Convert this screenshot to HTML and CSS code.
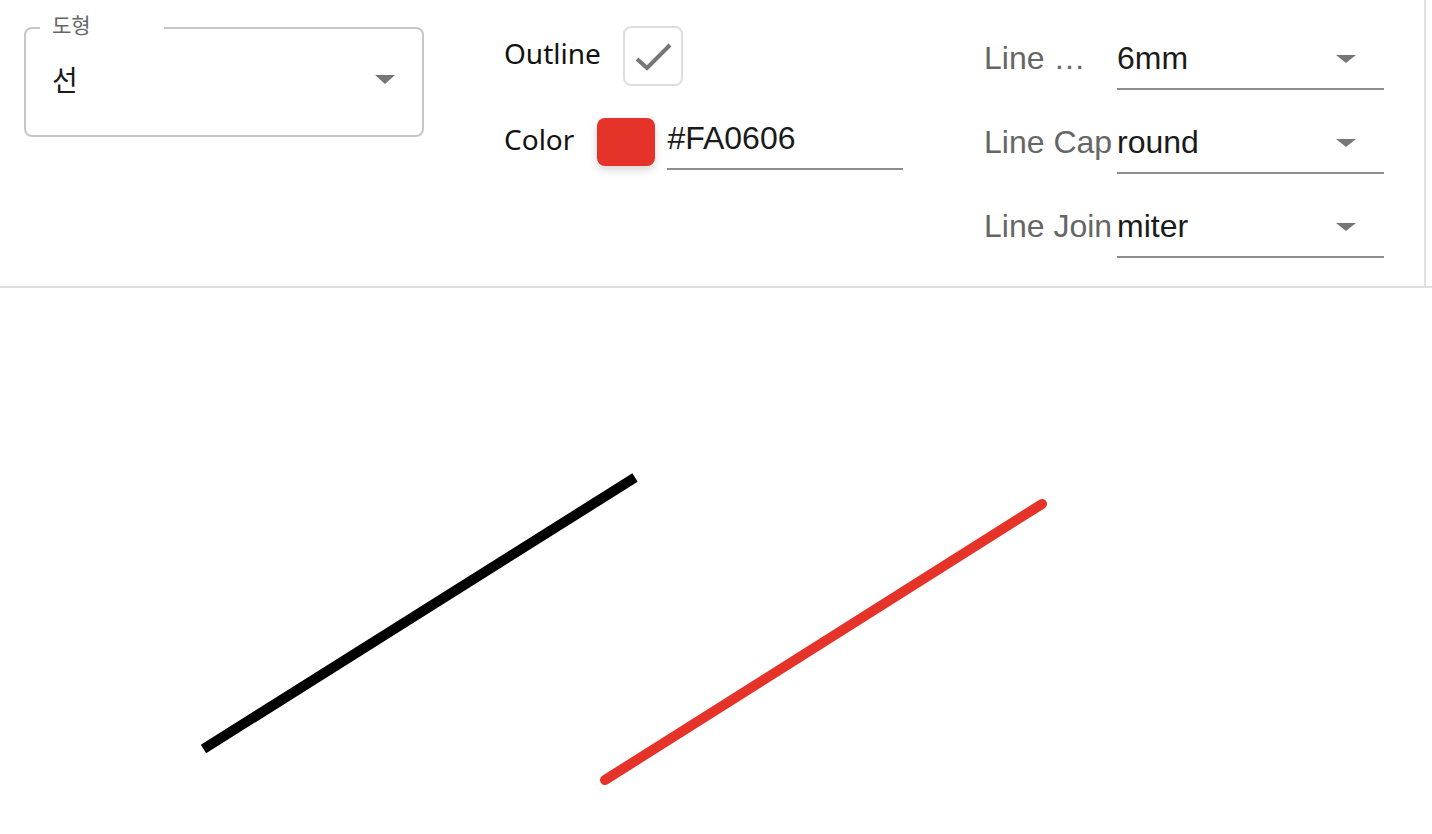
FILE: index.html
```html
<!DOCTYPE html>
<html lang="ko">
<head>
<meta charset="utf-8">
<title>Line style</title>
<link rel="stylesheet" href="styles.css">
</head>
<body>
<div class="panel">
  <div class="toolbar">
    <div class="col col-shape">
      <div class="outlined-select">
        <span class="notch-label">도형</span>
        <div class="select-row">
          <span class="select-value">선</span>
          <span class="caret"></span>
        </div>
      </div>
    </div>
    <div class="col col-style">
      <div class="style-row">
        <span class="style-label outline-label">Outline</span>
        <span class="checkbox">
          <svg width="56" height="56" viewBox="0 0 56 56"><path d="M12 31 L22 40 L45 17" fill="none" stroke="#767676" stroke-width="4"/></svg>
        </span>
      </div>
      <div class="style-row color-row">
        <span class="style-label">Color</span>
        <span class="swatch"></span>
        <span class="hex-input">#FA0606</span>
      </div>
    </div>
    <div class="col col-line">
      <div class="line-row">
        <span class="line-label">Line …</span>
        <div class="underline-select"><span class="u-value">6mm</span><span class="caret small"></span></div>
      </div>
      <div class="line-row">
        <span class="line-label">Line Cap</span>
        <div class="underline-select"><span class="u-value">round</span><span class="caret small"></span></div>
      </div>
      <div class="line-row">
        <span class="line-label">Line Join</span>
        <div class="underline-select"><span class="u-value">miter</span><span class="caret small"></span></div>
      </div>
    </div>
  </div>
</div>
<div class="canvas">
  <svg class="drawing" width="1432" height="546" viewBox="0 0 1432 546">
    <line x1="203.5" y1="461" x2="635" y2="189.5" stroke="#000" stroke-width="10" stroke-linecap="butt"/>
    <line x1="605" y1="492" x2="1042" y2="216" stroke="#e5332a" stroke-width="10" stroke-linecap="round"/>
  </svg>
</div>
</body>
</html>
```

FILE: styles.css
```css
* { box-sizing: border-box; }
html, body { margin: 0; padding: 0; background: #fff; }
body {
  font-family: "Noto Sans", "Noto Sans CJK KR", sans-serif;
  color: #111;
  width: 1432px;
  height: 834px;
  overflow: hidden;
}
.panel {
  border-bottom: 2px solid #dde1dd;
}
.toolbar {
  display: flex;
  width: 1426px;
  height: 286px;
  border-right: 2px solid #e2e2e2;
  padding-left: 24px;
}
.col-shape { width: 481px; padding-top: 27px; }
.col-style { width: 480px; padding-top: 26px; }
.col-line { width: 399px; padding-top: 38px; }

.outlined-select {
  position: relative;
  width: 400px;
  height: 110px;
  border: 2px solid #c6c6c6;
  border-radius: 8px;
  padding: 30px 27px 0 26px;
}
.notch-label {
  position: absolute;
  left: 14px;
  top: -19px;
  padding: 0 73px 0 12px;
  background: #fff;
  font-family: "Noto Sans CJK KR", "Noto Sans", sans-serif;
  font-size: 21px;
  line-height: 28px;
  color: #666;
}
.select-row {
  display: flex;
  align-items: center;
  height: 40px;
}
.select-value {
  flex: 1;
  font-family: "Noto Sans CJK KR", "Noto Sans", sans-serif;
  font-size: 28px;
  line-height: 40px;
  color: #1a1a1a;
}
.caret {
  width: 0;
  height: 0;
  border-left: 10px solid transparent;
  border-right: 10px solid transparent;
  border-top: 9px solid #767676;
}

.style-row {
  display: flex;
  align-items: center;
  height: 60px;
}
.style-label {
  font-size: 28px;
  line-height: 40px;
  color: #111;
  margin-left: -1px;
  margin-right: 22px;
}
.outline-label {
  padding-bottom: 7px;
}
.checkbox {
  display: flex;
  align-items: center;
  justify-content: center;
  width: 60px;
  height: 60px;
  border: 2px solid #dedede;
  border-radius: 8px;
}
.color-row {
  margin-top: 32px;
  align-items: flex-start;
  height: 52px;
}
.color-row .style-label {
  line-height: 42px;
  margin-right: 23px;
}
.swatch {
  width: 58px;
  height: 48px;
  border-radius: 8px;
  background: #e5332a;
  box-shadow: 0 4px 9px rgba(0, 0, 0, 0.16);
}
.hex-input {
  margin-left: 12px;
  width: 236px;
  height: 52px;
  font-family: "Liberation Sans", Arial, sans-serif;
  font-size: 32px;
  line-height: 40px;
  color: #1a1a1a;
  border-bottom: 2px solid #8e8e8e;
}

.line-row {
  display: flex;
  height: 52px;
  margin-bottom: 32px;
  font-family: "Liberation Sans", Arial, sans-serif;
  font-size: 32px;
  line-height: 40px;
}
.line-label {
  width: 133px;
  margin-left: -1px;
  color: #666;
  white-space: nowrap;
  overflow: hidden;
}
.underline-select {
  display: flex;
  width: 267px;
  height: 52px;
  border-bottom: 2px solid #8e8e8e;
}
.u-value {
  flex: 1;
  color: #1a1a1a;
}
.caret.small {
  margin-top: 17px;
  margin-right: 28px;
  border-top-width: 8px;
}

.canvas {
  height: 546px;
}
.drawing { display: block; }
```
